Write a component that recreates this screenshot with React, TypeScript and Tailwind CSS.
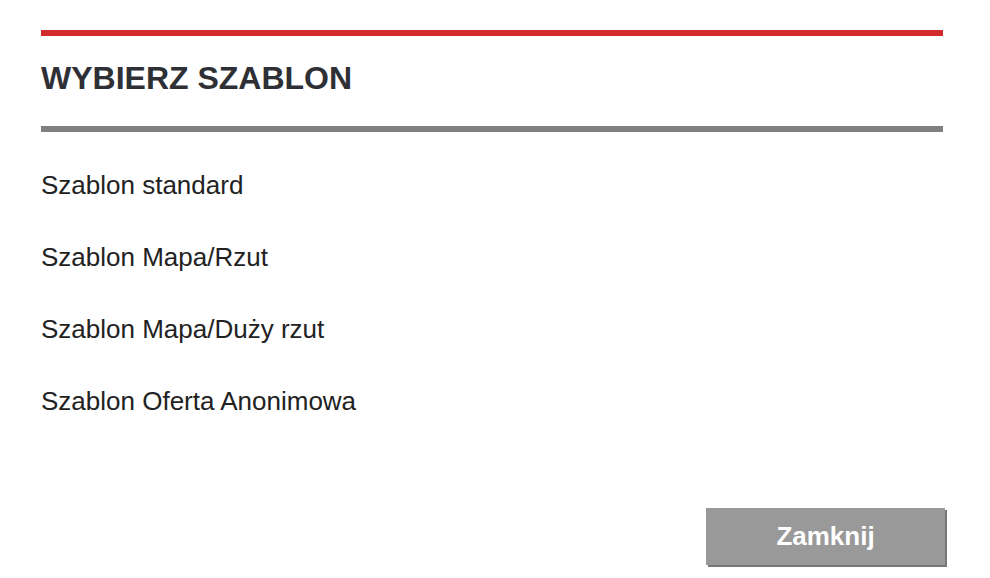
import React from 'react'

const templates = [
  'Szablon standard',
  'Szablon Mapa/Rzut',
  'Szablon Mapa/Duży rzut',
  'Szablon Oferta Anonimowa',
]

export default function App() {
  return (
    <div className="min-h-[578px] w-[990px] bg-white font-['Liberation_Sans',Arial,sans-serif]">
      <div className="ml-[41px] w-[902px] pt-[30px]">
        {/* Header */}
        <div className="h-[6px] bg-[#d22b2b]" />
        <h1 className="mt-[26px] text-[32px] font-bold leading-none text-[#2e3035]">WYBIERZ SZABLON</h1>
        <div className="mt-[32px] h-[6px] bg-[#808080]" />

        {/* Template list */}
        <ul className="mt-[40px] flex flex-col gap-[46px]">
          {templates.map((name) => (
            <li key={name} className="cursor-pointer text-[26px] leading-none text-[#222]">
              {name}
            </li>
          ))}
        </ul>

        {/* Footer */}
        <div className="mt-[94px] flex justify-end">
          <button className="-mr-[2px] h-[57px] w-[239px] bg-[#999999] text-[26px] font-bold text-white shadow-[2px_2px_0_#777777]">
            Zamknij
          </button>
        </div>
      </div>
    </div>
  )
}
